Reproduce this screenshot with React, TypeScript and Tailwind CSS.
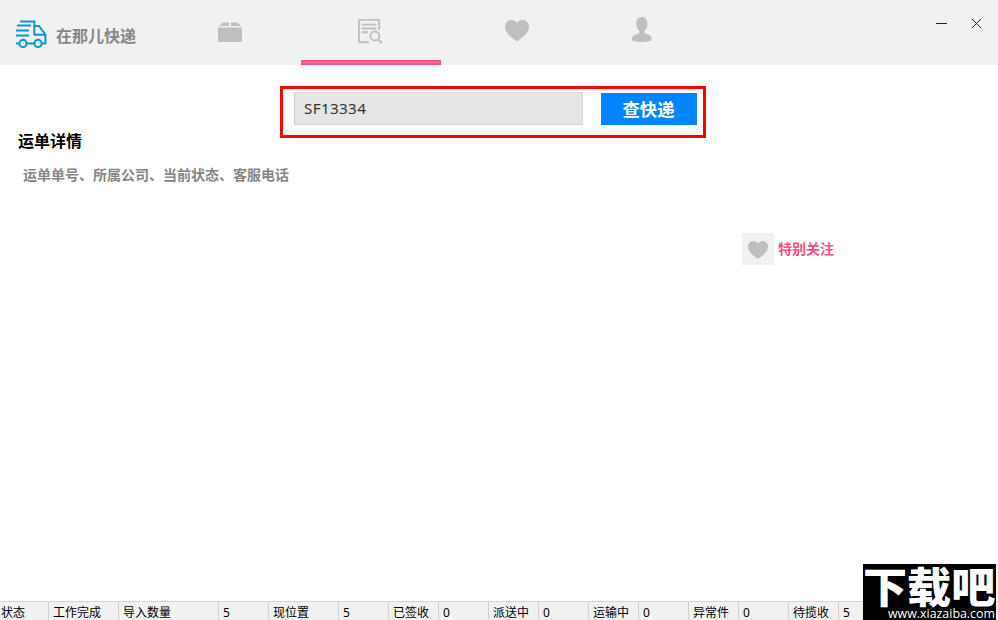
import React from "react";

const HEART =
  "M12 21.5C9 19 0 14 0 6.8C0 2.8 2.8 0 6.3 0C8.9 0 11 1.2 12 3.2C13 1.2 15.1 0 17.7 0C21.2 0 24 2.8 24 6.8C24 14 15 19 12 21.5Z";

function TruckIcon() {
  return (
    <svg width="32" height="28" viewBox="0 0 32 28" fill="none" stroke="#0c93dc" strokeWidth="2">
      <path d="M5 1.6H19.3V14.8M2 5.6H16M1 10.6H14M1 15.6H14M19 6H24L30.4 14.5V23.5H27M1 23.5H4M12 23.5H19M19 14.8H30" />
      <circle cx="8" cy="23.4" r="3.6" />
      <circle cx="23" cy="23.4" r="3.6" />
    </svg>
  );
}

function BoxIcon() {
  return (
    <svg width="24" height="21" viewBox="0 0 24 21" fill="#bfbfbf">
      <path d="M5 0.5H11V4H1ZM13 0.5H19L23 4H13ZM0 5.5H24V20H0Z" />
    </svg>
  );
}

function SearchListIcon() {
  return (
    <svg width="25" height="25" viewBox="0 0 25 25" fill="none" stroke="#bfbfbf" strokeWidth="1.9">
      <path d="M11 23.2H2Q.9 23.2 .9 22V2Q.9 .9 2 .9H20Q21.2 .9 21.2 2V11M3.5 5.6H18.5M3.5 9.5H18.5M3.5 13.2H10" />
      <circle cx="16.8" cy="17" r="4.5" />
      <path d="M20 20.3L23.8 24" strokeWidth="2.2" />
    </svg>
  );
}

function UserIcon() {
  return (
    <svg width="20" height="25" viewBox="0 0 20 25" fill="#bfbfbf">
      <path d="M9.8 0C13.3 0 15.4 2.5 15.4 6.5C15.4 9.7 14.4 12.3 12.5 14V16.2C15.5 17.5 19.5 18 19.5 21V23.5Q15 25 9.8 25Q4.5 25 .2 23.5V21C.2 18 4.2 17.5 7.2 16.2V14C5.2 12.3 4.2 9.7 4.2 6.5C4.2 2.5 6.3 0 9.8 0Z" />
    </svg>
  );
}

const status = [
  ["状态", "w-12 pl-px"],
  ["工作完成", "w-[70px] border-l pl-1"],
  ["导入数量", "w-[100px] border-l pl-1"],
  ["5", "w-[50px] border-l pl-1"],
  ["现位置", "w-[70px] border-l pl-1"],
  ["5", "w-[50px] border-l pl-1"],
  ["已签收", "w-[50px] border-l pl-1"],
  ["0", "w-[50px] border-l pl-1"],
  ["派送中", "w-[50px] border-l pl-1"],
  ["0", "w-[50px] border-l pl-1"],
  ["运输中", "w-[50px] border-l pl-1"],
  ["0", "w-[50px] border-l pl-1"],
  ["异常件", "w-[50px] border-l pl-1"],
  ["0", "w-[50px] border-l pl-1"],
  ["待揽收", "w-[50px] border-l pl-1"],
  ["5", "w-[160px] border-l pl-1"],
];

export default function App() {
  return (
    <div className="relative flex h-[620px] w-[998px] flex-col overflow-hidden bg-white font-['Noto_Sans','Noto_Sans_CJK_SC',sans-serif] text-black">
      <header className="flex h-[65px] shrink-0 bg-[#f1f1f1]">
        <div className="flex w-[161px] pl-[15px] pt-5">
          <TruckIcon />
          <span className="ml-[9px] mt-[3px] h-6 whitespace-nowrap font-['Noto_Sans_CJK_SC',sans-serif] text-base leading-6 font-bold text-[#868686]">在那儿快递</span>
        </div>
        <nav className="flex">
          <button className="flex w-[140px] items-start pl-[57px] pt-[22px]"><BoxIcon /></button>
          <button className="flex w-[140px] flex-col justify-between pt-[19px]">
            <span className="pl-[57px]"><SearchListIcon /></span>
            <span className="h-[5px] w-full border-y-2 border-[#ff4d88] bg-[#ff70b4]" />
          </button>
          <button className="flex w-[140px] items-start pl-16 pt-[19.5px]">
            <svg width="24" height="21.5" viewBox="0 0 24 21.5" fill="#bfbfbf"><path d={HEART} /></svg>
          </button>
          <button className="flex w-[140px] items-start pl-[51px] pt-[17px]"><UserIcon /></button>
        </nav>
        <div className="ml-auto flex pr-4 pt-[18px]">
          <svg width="46" height="11" viewBox="0 0 46 11" fill="none" stroke="#1b1f27" strokeWidth="1">
            <path d="M0 5.5H11" />
            <path d="M36 1L45 10M45 1L36 10" />
          </svg>
        </div>
      </header>

      <main className="flex flex-1 flex-col">
        <div className="ml-[280px] mt-[21px] flex h-[52px] w-[426px] border-[3px] border-[#ff0000] pl-[11px] pt-[3px]">
          <div className="h-[33px] w-[289px] border border-[#d3d3d3] bg-[#e5e5e5] pl-[9px] font-['Noto_Sans',sans-serif] text-[15.3px] leading-[31px] tracking-[0.3px] text-[#333]">SF13334</div>
          <button className="ml-[18px] mt-px h-8 w-24 bg-[#0085ff] pr-px font-['Noto_Sans_CJK_SC',sans-serif] text-[17.3px] leading-8 font-bold text-white">查快递</button>
        </div>
        <h1 className="-mt-[10px] ml-[18px] h-6 w-32 font-['Noto_Sans_CJK_SC',sans-serif] text-base leading-6 font-bold">运单详情</h1>
        <p className="ml-[23px] mt-3 h-5 font-['Noto_Sans_CJK_SC',sans-serif] text-sm leading-5 font-bold text-[#868686]">运单单号、所属公司、当前状态、客服电话</p>
        <div className="ml-[742px] mt-[49px] flex h-8 items-center">
          <div className="flex h-8 w-8 items-center justify-center bg-[#f1f1f1] pt-px">
            <svg width="20" height="18" viewBox="0 0 24 21.5" fill="#bfbfbf"><path d={HEART} /></svg>
          </div>
          <span className="-mt-0.5 ml-1 font-['Noto_Sans_CJK_SC',sans-serif] text-sm leading-5 font-bold text-[#ff4d82]">特别关注</span>
        </div>
      </main>

      <footer className="flex h-[19px] shrink-0 border-t border-[#d5d5d5] bg-[#f1f1f1] text-xs leading-[22px]">
        {status.map(([label, cls], i) => (
          <div key={i} className={`${cls} shrink-0 whitespace-nowrap border-[#d0d0d0]`}>{label}</div>
        ))}
      </footer>

      <div className="absolute left-[863px] top-[564px] h-14 w-[133px] bg-black text-white">
        <div className="h-[42px] w-[126px] origin-top-left scale-x-[1.05] whitespace-nowrap font-['Noto_Sans_CJK_SC',sans-serif] text-[42px] leading-[42px] font-black">下载吧</div>
        <div className="ml-[25px] mt-0.5 h-3 whitespace-nowrap font-['Open_Sans',sans-serif] text-[12.4px] leading-3">www.xiazaiba.com</div>
      </div>
    </div>
  );
}
